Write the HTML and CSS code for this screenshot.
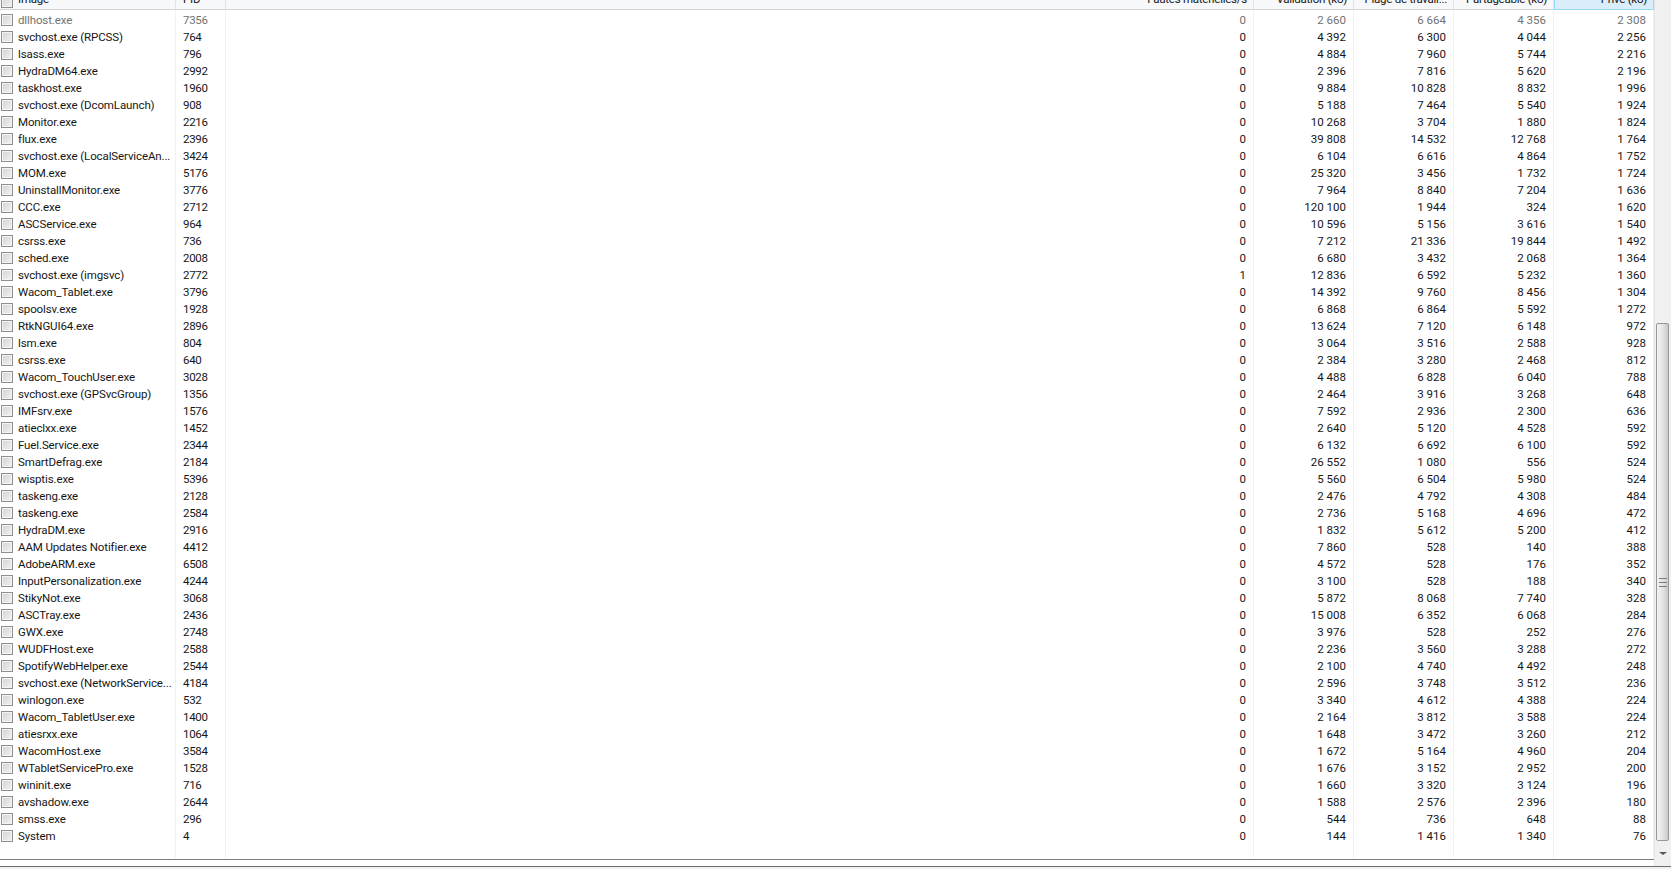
FILE: index.html
```html
<!DOCTYPE html>
<html lang="fr">
<head>
    <meta charset="UTF-8">
    <title>Processus</title>
    <link rel="stylesheet" href="styles.css">
</head>
<body>
<div class="window">
    <div class="main">
        <div class="list">
            <table>
                <thead>
                <tr>
                    <th class="col-name"><div class="head-text"><span class="check"></span>Image</div></th>
                    <th class="col-pid"><div class="head-text">PID</div></th>
                    <th><div class="head-text right">Fautes matérielles/s</div></th>
                    <th class="col-num"><div class="head-text right">Validation (ko)</div></th>
                    <th class="col-num"><div class="head-text right">Plage de travail...</div></th>
                    <th class="col-num"><div class="head-text right">Partageable (ko)</div></th>
                    <th class="col-num sorted"><div class="head-text right">Privé (ko)</div></th>
                </tr>
                </thead>
                <tbody>
                <tr class="spacer"><td></td><td></td><td></td><td></td><td></td><td></td><td></td></tr>
                <tr class="dim"><td><span class="check"></span>dllhost.exe</td><td class="pid">7356</td><td class="num">0</td><td class="num">2&nbsp;660</td><td class="num">6&nbsp;664</td><td class="num">4&nbsp;356</td><td class="num">2&nbsp;308</td></tr>
                <tr><td><span class="check"></span>svchost.exe (RPCSS)</td><td class="pid">764</td><td class="num">0</td><td class="num">4&nbsp;392</td><td class="num">6&nbsp;300</td><td class="num">4&nbsp;044</td><td class="num">2&nbsp;256</td></tr>
                <tr><td><span class="check"></span>lsass.exe</td><td class="pid">796</td><td class="num">0</td><td class="num">4&nbsp;884</td><td class="num">7&nbsp;960</td><td class="num">5&nbsp;744</td><td class="num">2&nbsp;216</td></tr>
                <tr><td><span class="check"></span>HydraDM64.exe</td><td class="pid">2992</td><td class="num">0</td><td class="num">2&nbsp;396</td><td class="num">7&nbsp;816</td><td class="num">5&nbsp;620</td><td class="num">2&nbsp;196</td></tr>
                <tr><td><span class="check"></span>taskhost.exe</td><td class="pid">1960</td><td class="num">0</td><td class="num">9&nbsp;884</td><td class="num">10&nbsp;828</td><td class="num">8&nbsp;832</td><td class="num">1&nbsp;996</td></tr>
                <tr><td><span class="check"></span>svchost.exe (DcomLaunch)</td><td class="pid">908</td><td class="num">0</td><td class="num">5&nbsp;188</td><td class="num">7&nbsp;464</td><td class="num">5&nbsp;540</td><td class="num">1&nbsp;924</td></tr>
                <tr><td><span class="check"></span>Monitor.exe</td><td class="pid">2216</td><td class="num">0</td><td class="num">10&nbsp;268</td><td class="num">3&nbsp;704</td><td class="num">1&nbsp;880</td><td class="num">1&nbsp;824</td></tr>
                <tr><td><span class="check"></span>flux.exe</td><td class="pid">2396</td><td class="num">0</td><td class="num">39&nbsp;808</td><td class="num">14&nbsp;532</td><td class="num">12&nbsp;768</td><td class="num">1&nbsp;764</td></tr>
                <tr><td><span class="check"></span>svchost.exe (LocalServiceAn...</td><td class="pid">3424</td><td class="num">0</td><td class="num">6&nbsp;104</td><td class="num">6&nbsp;616</td><td class="num">4&nbsp;864</td><td class="num">1&nbsp;752</td></tr>
                <tr><td><span class="check"></span>MOM.exe</td><td class="pid">5176</td><td class="num">0</td><td class="num">25&nbsp;320</td><td class="num">3&nbsp;456</td><td class="num">1&nbsp;732</td><td class="num">1&nbsp;724</td></tr>
                <tr><td><span class="check"></span>UninstallMonitor.exe</td><td class="pid">3776</td><td class="num">0</td><td class="num">7&nbsp;964</td><td class="num">8&nbsp;840</td><td class="num">7&nbsp;204</td><td class="num">1&nbsp;636</td></tr>
                <tr><td><span class="check"></span>CCC.exe</td><td class="pid">2712</td><td class="num">0</td><td class="num">120&nbsp;100</td><td class="num">1&nbsp;944</td><td class="num">324</td><td class="num">1&nbsp;620</td></tr>
                <tr><td><span class="check"></span>ASCService.exe</td><td class="pid">964</td><td class="num">0</td><td class="num">10&nbsp;596</td><td class="num">5&nbsp;156</td><td class="num">3&nbsp;616</td><td class="num">1&nbsp;540</td></tr>
                <tr><td><span class="check"></span>csrss.exe</td><td class="pid">736</td><td class="num">0</td><td class="num">7&nbsp;212</td><td class="num">21&nbsp;336</td><td class="num">19&nbsp;844</td><td class="num">1&nbsp;492</td></tr>
                <tr><td><span class="check"></span>sched.exe</td><td class="pid">2008</td><td class="num">0</td><td class="num">6&nbsp;680</td><td class="num">3&nbsp;432</td><td class="num">2&nbsp;068</td><td class="num">1&nbsp;364</td></tr>
                <tr><td><span class="check"></span>svchost.exe (imgsvc)</td><td class="pid">2772</td><td class="num">1</td><td class="num">12&nbsp;836</td><td class="num">6&nbsp;592</td><td class="num">5&nbsp;232</td><td class="num">1&nbsp;360</td></tr>
                <tr><td><span class="check"></span>Wacom_Tablet.exe</td><td class="pid">3796</td><td class="num">0</td><td class="num">14&nbsp;392</td><td class="num">9&nbsp;760</td><td class="num">8&nbsp;456</td><td class="num">1&nbsp;304</td></tr>
                <tr><td><span class="check"></span>spoolsv.exe</td><td class="pid">1928</td><td class="num">0</td><td class="num">6&nbsp;868</td><td class="num">6&nbsp;864</td><td class="num">5&nbsp;592</td><td class="num">1&nbsp;272</td></tr>
                <tr><td><span class="check"></span>RtkNGUI64.exe</td><td class="pid">2896</td><td class="num">0</td><td class="num">13&nbsp;624</td><td class="num">7&nbsp;120</td><td class="num">6&nbsp;148</td><td class="num">972</td></tr>
                <tr><td><span class="check"></span>lsm.exe</td><td class="pid">804</td><td class="num">0</td><td class="num">3&nbsp;064</td><td class="num">3&nbsp;516</td><td class="num">2&nbsp;588</td><td class="num">928</td></tr>
                <tr><td><span class="check"></span>csrss.exe</td><td class="pid">640</td><td class="num">0</td><td class="num">2&nbsp;384</td><td class="num">3&nbsp;280</td><td class="num">2&nbsp;468</td><td class="num">812</td></tr>
                <tr><td><span class="check"></span>Wacom_TouchUser.exe</td><td class="pid">3028</td><td class="num">0</td><td class="num">4&nbsp;488</td><td class="num">6&nbsp;828</td><td class="num">6&nbsp;040</td><td class="num">788</td></tr>
                <tr><td><span class="check"></span>svchost.exe (GPSvcGroup)</td><td class="pid">1356</td><td class="num">0</td><td class="num">2&nbsp;464</td><td class="num">3&nbsp;916</td><td class="num">3&nbsp;268</td><td class="num">648</td></tr>
                <tr><td><span class="check"></span>IMFsrv.exe</td><td class="pid">1576</td><td class="num">0</td><td class="num">7&nbsp;592</td><td class="num">2&nbsp;936</td><td class="num">2&nbsp;300</td><td class="num">636</td></tr>
                <tr><td><span class="check"></span>atieclxx.exe</td><td class="pid">1452</td><td class="num">0</td><td class="num">2&nbsp;640</td><td class="num">5&nbsp;120</td><td class="num">4&nbsp;528</td><td class="num">592</td></tr>
                <tr><td><span class="check"></span>Fuel.Service.exe</td><td class="pid">2344</td><td class="num">0</td><td class="num">6&nbsp;132</td><td class="num">6&nbsp;692</td><td class="num">6&nbsp;100</td><td class="num">592</td></tr>
                <tr><td><span class="check"></span>SmartDefrag.exe</td><td class="pid">2184</td><td class="num">0</td><td class="num">26&nbsp;552</td><td class="num">1&nbsp;080</td><td class="num">556</td><td class="num">524</td></tr>
                <tr><td><span class="check"></span>wisptis.exe</td><td class="pid">5396</td><td class="num">0</td><td class="num">5&nbsp;560</td><td class="num">6&nbsp;504</td><td class="num">5&nbsp;980</td><td class="num">524</td></tr>
                <tr><td><span class="check"></span>taskeng.exe</td><td class="pid">2128</td><td class="num">0</td><td class="num">2&nbsp;476</td><td class="num">4&nbsp;792</td><td class="num">4&nbsp;308</td><td class="num">484</td></tr>
                <tr><td><span class="check"></span>taskeng.exe</td><td class="pid">2584</td><td class="num">0</td><td class="num">2&nbsp;736</td><td class="num">5&nbsp;168</td><td class="num">4&nbsp;696</td><td class="num">472</td></tr>
                <tr><td><span class="check"></span>HydraDM.exe</td><td class="pid">2916</td><td class="num">0</td><td class="num">1&nbsp;832</td><td class="num">5&nbsp;612</td><td class="num">5&nbsp;200</td><td class="num">412</td></tr>
                <tr><td><span class="check"></span>AAM Updates Notifier.exe</td><td class="pid">4412</td><td class="num">0</td><td class="num">7&nbsp;860</td><td class="num">528</td><td class="num">140</td><td class="num">388</td></tr>
                <tr><td><span class="check"></span>AdobeARM.exe</td><td class="pid">6508</td><td class="num">0</td><td class="num">4&nbsp;572</td><td class="num">528</td><td class="num">176</td><td class="num">352</td></tr>
                <tr><td><span class="check"></span>InputPersonalization.exe</td><td class="pid">4244</td><td class="num">0</td><td class="num">3&nbsp;100</td><td class="num">528</td><td class="num">188</td><td class="num">340</td></tr>
                <tr><td><span class="check"></span>StikyNot.exe</td><td class="pid">3068</td><td class="num">0</td><td class="num">5&nbsp;872</td><td class="num">8&nbsp;068</td><td class="num">7&nbsp;740</td><td class="num">328</td></tr>
                <tr><td><span class="check"></span>ASCTray.exe</td><td class="pid">2436</td><td class="num">0</td><td class="num">15&nbsp;008</td><td class="num">6&nbsp;352</td><td class="num">6&nbsp;068</td><td class="num">284</td></tr>
                <tr><td><span class="check"></span>GWX.exe</td><td class="pid">2748</td><td class="num">0</td><td class="num">3&nbsp;976</td><td class="num">528</td><td class="num">252</td><td class="num">276</td></tr>
                <tr><td><span class="check"></span>WUDFHost.exe</td><td class="pid">2588</td><td class="num">0</td><td class="num">2&nbsp;236</td><td class="num">3&nbsp;560</td><td class="num">3&nbsp;288</td><td class="num">272</td></tr>
                <tr><td><span class="check"></span>SpotifyWebHelper.exe</td><td class="pid">2544</td><td class="num">0</td><td class="num">2&nbsp;100</td><td class="num">4&nbsp;740</td><td class="num">4&nbsp;492</td><td class="num">248</td></tr>
                <tr><td><span class="check"></span>svchost.exe (NetworkService...</td><td class="pid">4184</td><td class="num">0</td><td class="num">2&nbsp;596</td><td class="num">3&nbsp;748</td><td class="num">3&nbsp;512</td><td class="num">236</td></tr>
                <tr><td><span class="check"></span>winlogon.exe</td><td class="pid">532</td><td class="num">0</td><td class="num">3&nbsp;340</td><td class="num">4&nbsp;612</td><td class="num">4&nbsp;388</td><td class="num">224</td></tr>
                <tr><td><span class="check"></span>Wacom_TabletUser.exe</td><td class="pid">1400</td><td class="num">0</td><td class="num">2&nbsp;164</td><td class="num">3&nbsp;812</td><td class="num">3&nbsp;588</td><td class="num">224</td></tr>
                <tr><td><span class="check"></span>atiesrxx.exe</td><td class="pid">1064</td><td class="num">0</td><td class="num">1&nbsp;648</td><td class="num">3&nbsp;472</td><td class="num">3&nbsp;260</td><td class="num">212</td></tr>
                <tr><td><span class="check"></span>WacomHost.exe</td><td class="pid">3584</td><td class="num">0</td><td class="num">1&nbsp;672</td><td class="num">5&nbsp;164</td><td class="num">4&nbsp;960</td><td class="num">204</td></tr>
                <tr><td><span class="check"></span>WTabletServicePro.exe</td><td class="pid">1528</td><td class="num">0</td><td class="num">1&nbsp;676</td><td class="num">3&nbsp;152</td><td class="num">2&nbsp;952</td><td class="num">200</td></tr>
                <tr><td><span class="check"></span>wininit.exe</td><td class="pid">716</td><td class="num">0</td><td class="num">1&nbsp;660</td><td class="num">3&nbsp;320</td><td class="num">3&nbsp;124</td><td class="num">196</td></tr>
                <tr><td><span class="check"></span>avshadow.exe</td><td class="pid">2644</td><td class="num">0</td><td class="num">1&nbsp;588</td><td class="num">2&nbsp;576</td><td class="num">2&nbsp;396</td><td class="num">180</td></tr>
                <tr><td><span class="check"></span>smss.exe</td><td class="pid">296</td><td class="num">0</td><td class="num">544</td><td class="num">736</td><td class="num">648</td><td class="num">88</td></tr>
                <tr><td><span class="check"></span>System</td><td class="pid">4</td><td class="num">0</td><td class="num">144</td><td class="num">1&nbsp;416</td><td class="num">1&nbsp;340</td><td class="num">76</td></tr>
                <tr class="filler"><td></td><td></td><td></td><td></td><td></td><td></td><td></td></tr>
                </tbody>
            </table>
        </div>
        <div class="scrollbar">
            <div class="thumb">
                <div class="grip"></div>
            </div>
            <div class="arrow-zone"><span class="arrow-down"></span></div>
        </div>
    </div>
    <div class="status"></div>
</div>
</body>
</html>
```

FILE: styles.css
```css
html, body {
    margin: 0;
    height: 100%;
    overflow: hidden;
}

body {
    font-family: "Roboto", "Noto Sans", sans-serif;
    font-size: 11.5px;
    color: #161616;
    background: #fff;
}

.window {
    display: flex;
    flex-direction: column;
    height: 869px;
}

.main {
    display: flex;
    height: 866px;
}

.list {
    width: 1654px;
    height: 860px;
    border-bottom: 1px solid #7d7d7d;
    box-sizing: border-box;
    overflow: hidden;
}

table {
    width: 1654px;
    table-layout: fixed;
    border-collapse: separate;
    border-spacing: 0;
}

th {
    height: 10px;
    padding: 0;
    box-sizing: border-box;
    font-weight: normal;
    letter-spacing: -0.25px;
    background: #f7f8f9;
    border-right: 1px solid #e2e3e5;
    border-bottom: 1px solid #d5d5d5;
}

.col-name {
    width: 176px;
}

.col-pid {
    width: 50px;
}

.col-num {
    width: 100px;
}

th.sorted {
    background: #d9eefa;
    border-left: 1px solid #96d9f9;
    border-right: 1px solid #96d9f9;
    border-bottom: 1px solid #96d9f9;
}

.head-text {
    display: flex;
    align-items: flex-end;
    height: 8px;
    padding: 0 6px 1px 7px;
    overflow: hidden;
    white-space: nowrap;
    line-height: 17px;
}

.head-text.right {
    justify-content: flex-end;
}

.head-text .check {
    flex: none;
}

td {
    height: 17px;
    padding: 0 8px 0 7px;
    box-sizing: border-box;
    line-height: 17px;
    letter-spacing: -0.12px;
    white-space: nowrap;
    overflow: hidden;
    border-right: 1px solid #f2f2f2;
}

.spacer td {
    height: 2px;
    padding: 0;
    line-height: 2px;
}

.filler td {
    height: 13px;
}

td.num {
    padding-right: 7px;
    text-align: right;
    letter-spacing: 0;
}

td.pid {
    letter-spacing: -0.3px;
}

.dim {
    color: #727272;
}

.check {
    display: inline-block;
    width: 12px;
    height: 12px;
    margin: 0 5px 0 -6px;
    box-sizing: border-box;
    vertical-align: -2px;
    border: 1px solid #8e8f8f;
    background: linear-gradient(135deg, #d3d3d3, #f2f2f2);
    box-shadow: inset 0 0 0 1px #f4f4f4;
}

.scrollbar {
    display: flex;
    flex-direction: column;
    width: 17px;
    padding-top: 323px;
    box-sizing: border-box;
    background: #f0f0f0;
    border-left: 1px solid #e6e6e6;
}

.thumb {
    display: flex;
    align-items: center;
    justify-content: center;
    width: 13px;
    height: 518px;
    margin-left: 1px;
    box-sizing: border-box;
    border: 1px solid #979797;
    border-radius: 2px;
    background: linear-gradient(90deg, #f2f2f2, #e4e4e4 50%, #c9c9c9);
}

.grip {
    width: 8px;
    height: 7px;
    border-top: 1px solid #7a7a7a;
    border-bottom: 1px solid #7a7a7a;
    background: linear-gradient(#7a7a7a, #7a7a7a) center / 100% 1px no-repeat;
}

.arrow-zone {
    display: flex;
    flex: 1;
    align-items: center;
    justify-content: center;
}

.arrow-down {
    width: 0;
    height: 0;
    border-left: 4px solid transparent;
    border-right: 4px solid transparent;
    border-top: 3px solid #555;
}

.status {
    height: 3px;
    background: #f0f0f0;
    border-top: 1px solid #6f6f6f;
    box-sizing: border-box;
}
```
